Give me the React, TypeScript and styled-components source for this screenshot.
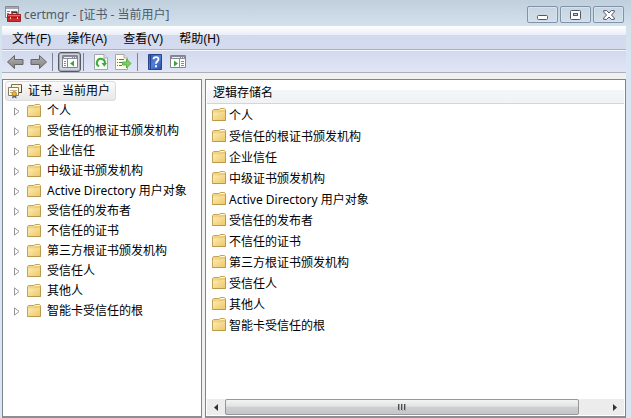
import React from "react";
import styled, { createGlobalStyle, css } from "styled-components";

const GlobalStyle = createGlobalStyle`
  * { box-sizing: border-box; }
  body { margin: 0; }
  body, button {
    font-family: "Noto Sans", "Noto Sans CJK SC", sans-serif;
    font-size: 12px;
    line-height: 20px;
    color: #000;
  }
  button { margin: 0; padding: 0; border: 0; background: none; }
  ul { list-style: none; margin: 0; padding: 0; }
  svg { display: block; flex: none; }
`;

const Window = styled.div`
  display: flex;
  flex-direction: column;
  height: 100vh;
  padding: 0 5px 0 2px;
  background: linear-gradient(#c0cfdc 0, #d3e1ed 26px, #d8e5f2 60px);
`;

const TitleBar = styled.header`
  display: flex;
  align-items: center;
  flex: none;
  height: 26px;
  padding: 2px 2px 0 3px;
`;

const Title = styled.h1`
  flex: 1;
  margin: 2px 0 0 3px;
  font-size: 12px;
  font-weight: 400;
  line-height: 20px;
  color: #4c5b6b;
  white-space: nowrap;
`;

const WindowButtons = styled.div`
  display: flex;
  gap: 2px;
  padding-top: 1px;
`;

const WindowButton = styled.button`
  display: flex;
  align-items: center;
  justify-content: center;
  width: 31px;
  height: 17px;
  border: 1px solid #8193a7;
  border-radius: 2px;
  background: linear-gradient(#c7d5e2, #d2dfeb);
  box-shadow: inset 0 0 0 1px #d6e2ec;
`;

const MenuBar = styled.nav`
  display: flex;
  flex: none;
  gap: 16px;
  height: 24px;
  padding: 2px 10px 0;
  border-bottom: 1px solid #adb1bf;
  background: linear-gradient(#fff 0, #e9edf7 9px, #d4daed 9px, #d5dbee 100%);
`;

const MenuItem = styled.button`
  font-family: "Liberation Sans", "Noto Sans CJK SC", sans-serif;
  white-space: nowrap;
`;

const ToolBar = styled.div`
  display: flex;
  align-items: center;
  flex: none;
  height: 23px;
  padding-left: 2px;
  border-top: 1px solid #f4f6fb;
  border-bottom: 1px solid #adb0b8;
  background: linear-gradient(#d3d9ee, #e1e6f6);
`;

const ToolButton = styled.button<{ $active?: boolean }>`
  display: flex;
  align-items: center;
  justify-content: center;
  width: 23px;
  height: 20px;
  border-radius: 3px;
  ${(p) =>
    p.$active &&
    css`
      border: 1px solid #555a66;
      background: #cfd3df;
      box-shadow: inset 0 0 0 1px #a5aab8;
    `}
`;

const Separator = styled.span`
  width: 1px;
  height: 18px;
  margin: 0 5px 0 2px;
  background: #7d8494;
`;

const Panes = styled.main`
  display: grid;
  grid-template-columns: 200px minmax(0, 1fr);
  gap: 3px;
  flex: 1;
  min-height: 0;
  padding-top: 6px;
  background: #f0f0f0;
`;

const Pane = styled.section`
  display: flex;
  flex-direction: column;
  min-width: 0;
  border: 1px solid #7f858c;
  border-bottom: 2px solid #8c8e94;
  background: #fff;
`;

const TreePane = styled(Pane)`
  padding: 1px 2px;
`;

const TreeRoot = styled.button`
  display: flex;
  align-items: center;
  align-self: flex-start;
  gap: 5px;
  height: 20px;
  padding: 0 5px 0 1px;
  border: 1px solid #dcdcdc;
  border-radius: 3px;
  background: linear-gradient(#fafafa, #e8e8e8);
  white-space: nowrap;
`;

const TreeRow = styled.li`
  display: flex;
  align-items: center;
  height: 20px;
  padding-left: 9px;
  white-space: nowrap;
`;

const Expander = styled.button`
  width: 13px;
`;

const TreeLabel = styled.span`
  margin-left: 5px;
`;

const ListPane = styled(Pane)`
  padding: 2px 1px 1px;
`;

const ColumnHeader = styled.div`
  flex: none;
  height: 22px;
  padding-left: 6px;
  line-height: 22px;
  border-bottom: 1px solid #d5d5d5;
  background: linear-gradient(#fff 0, #fff 8px, #f5f6f8 8px, #f1f2f4 100%);
`;

const StoreList = styled.ul`
  flex: 1;
  min-height: 0;
  padding-top: 1px;
`;

const StoreRow = styled.li`
  display: flex;
  align-items: center;
  gap: 2px;
  height: 21px;
  padding-left: 5px;
  white-space: nowrap;
`;

const ScrollBar = styled.div`
  display: flex;
  flex: none;
  height: 16px;
  background: #ececec;
`;

const ScrollButton = styled.button`
  display: flex;
  align-items: center;
  justify-content: center;
  width: 18px;
`;

const Track = styled.div`
  display: flex;
  flex: 1;
`;

const Thumb = styled.div`
  display: flex;
  align-items: center;
  justify-content: center;
  width: 93%;
  border: 1px solid #979797;
  border-radius: 2px;
  background: linear-gradient(#f3f3f3 0, #e3e3e3 45%, #cdcfd1 50%, #c4c6c9 100%);
`;

const Folder = () => (
  <svg width="15" height="15" viewBox="0 1 15 15" aria-hidden="true">
    <defs>
      <linearGradient id="folder" x2="1" y2="1">
        <stop offset="0" stopColor="#fdeeb5" />
        <stop offset="1" stopColor="#edc869" />
      </linearGradient>
    </defs>
    <path d="M.5 3.5 1.5 2.5H7L8 1.5H12.5L13.5 2.5V13.5H.5Z" fill="#f0d584" stroke="#c6a55b" />
    <path d="M8.5 2.5H12.5" stroke="#fffbe5" />
    <path d="M1 5.5H7.5L9 4H13V13H1Z" fill="url(#folder)" />
    <path d="M7.5 5.5 9 4H13" fill="none" stroke="#d5b162" strokeWidth=".7" />
    <path d="M.5 13.5H13.5V4" fill="none" stroke="#bd984f" />
  </svg>
);

const Arrow = ({ flip }: { flip?: boolean }) => (
  <svg width="17" height="14" viewBox="0 0 17 14" aria-hidden="true">
    <defs>
      <linearGradient id="arrow" x2="0" y2="1">
        <stop offset="0" stopColor="#b4b4b4" />
        <stop offset="1" stopColor="#808080" />
      </linearGradient>
    </defs>
    <path
      d={flip ? "M16.5 7 9.5.5V4.5H1V9.5H9.5V13.5Z" : "M.5 7 7.5.5V4.5H16V9.5H7.5V13.5Z"}
      fill="url(#arrow)"
      stroke="#656565"
      strokeLinejoin="round"
    />
  </svg>
);

const PanelIcon = ({ right }: { right?: boolean }) => (
  <svg width="16" height="13" viewBox="0 0 16 13" aria-hidden="true">
    <path d="M.5.5H15.5V12.5H.5Z" fill="#fff" stroke="#80848d" />
    <path d="M1 1H15V4H1Z" fill="#858a94" />
    <path d="M2 2.5H10M11 2.5H12M13 2.5H14" stroke="#eceef3" />
    {right ? (
      <>
        <path d="M9.5 4V12" stroke="#858a94" />
        <path d="M11 6.5H14M11 8.5H14M11 10.5H14" stroke="#858a94" />
        <path d="M4 5.5V11.5L8 8.5Z" fill="#35a936" />
      </>
    ) : (
      <>
        <path d="M5.5 4V12" stroke="#858a94" />
        <path d="M2 6.5H4M2 8.5H4M2 10.5H4" stroke="#858a94" />
        <path d="M12 5.5V11.5L8 8.5Z" fill="#35a936" />
      </>
    )}
  </svg>
);

const RefreshIcon = () => (
  <svg width="14" height="16" viewBox="0 0 14 16" aria-hidden="true">
    <path d="M.5.5H10L13.5 4V15.5H.5Z" fill="#fdfdf8" stroke="#a4a6ac" />
    <path d="M10 .5V4H13.5" fill="#e8e8e8" stroke="#a4a6ac" />
    <path d="M5 12.3A4 4 0 1 1 10.8 9.5" fill="none" stroke="#38ac38" strokeWidth="2" />
    <path d="M7.5 9H13L10.3 12.8Z" fill="#38ac38" />
  </svg>
);

const ExportIcon = () => (
  <svg width="17" height="16" viewBox="0 0 17 16" aria-hidden="true">
    <path d="M.5.5H9L12.5 4V15.5H.5Z" fill="#fffdec" stroke="#a9a9a2" />
    <path d="M9 .5V4H12.5" fill="#e8e8e0" stroke="#a9a9a2" />
    <path d="M2 5.5H3M4 5.5H9M2 8.5H3M4 8.5H7M2 11.5H3M4 11.5H7" stroke="#6c6c78" />
    <path d="M7.5 8H11.5V5L16 9.5 11.5 14V11H7.5Z" fill="#7bd25b" stroke="#43a43a" strokeWidth=".8" />
  </svg>
);

const HelpIcon = () => (
  <svg width="14" height="16" viewBox="0 0 14 16" aria-hidden="true">
    <defs>
      <linearGradient id="help" x2="1" y2="1">
        <stop offset="0" stopColor="#3159b0" />
        <stop offset=".5" stopColor="#5380d6" />
        <stop offset="1" stopColor="#294ba5" />
      </linearGradient>
    </defs>
    <path d="M.5.5H13.5V15.5H.5Z" fill="url(#help)" stroke="#27458f" />
    <path d="M2.5 1V15" stroke="#233f91" />
    <path d="M5.5 5.2C5.5 2.3 10.5 2.3 10.5 5.2 10.5 7.2 8 7.3 8 9.7" fill="none" stroke="#fff" strokeWidth="1.8" />
    <path d="M7 11.2H9V13.2H7Z" fill="#fff" />
  </svg>
);

const AppIcon = () => (
  <svg width="16" height="16" viewBox="0 0 16 16" aria-hidden="true">
    <path d="M.5.5H13.5V11.5H.5Z" fill="#f5f6f8" stroke="#858a93" />
    <path d="M1 1H13V3H1Z" fill="#a1a6b0" />
    <path d="M2 5.5H5M6 5.5H12M2 7.5H4" stroke="#7e838e" />
    <path d="M7 8V6.5H12V8" fill="none" stroke="#4b3033" strokeWidth="1.3" />
    <path d="M2.5 8.5H15.5V15.5H2.5Z" fill="#cb2c2c" stroke="#982225" />
    <path d="M3 9.5H15" stroke="#e86a61" />
    <path d="M3 11.5H15" stroke="#8b2022" />
    <path d="M5 11H6V13H5ZM12 11H13V13H12Z" fill="#f4d5ce" />
  </svg>
);

const CertificateIcon = () => (
  <svg width="16" height="16" viewBox="0 0 16 16" aria-hidden="true">
    <path d="M4.5 1.5H14.5V9.5H4.5Z" fill="#faf3dd" stroke="#807153" />
    <path d="M14.5 2V9.5H5" fill="none" stroke="#51483b" />
    <path d="M1.5 4.5H11.5V12.5H1.5Z" fill="#fffdf1" stroke="#8c7d61" />
    <path d="M3 7.5H10M3 9.5H6" stroke="#bcb39d" />
    <path d="M6 11 5 15.5 7.3 14.3 9.5 15.5 9 11Z" fill="#3d5e91" />
    <circle cx="7.3" cy="10.8" r="2.2" fill="#f0b62b" stroke="#a97513" strokeWidth=".8" />
  </svg>
);

const MinimizeIcon = () => (
  <svg width="12" height="12" viewBox="0 0 12 12" aria-hidden="true">
    <rect x=".5" y="6.5" width="10" height="4" rx="1" fill="#fff" stroke="#535666" />
  </svg>
);

const MaximizeIcon = () => (
  <svg width="12" height="10" viewBox="0 0 12 10" aria-hidden="true">
    <rect x=".5" y=".5" width="10" height="9" rx="1" fill="#fff" stroke="#535666" />
    <rect x="3.5" y="3.5" width="4" height="2" fill="#c9d5e2" stroke="#535666" />
  </svg>
);

const CloseIcon = () => (
  <svg width="12" height="10" viewBox="0 0 12 10" aria-hidden="true">
    <path
      d="M.7.6H3.7L6 3 8.3.6H11.3V2L8.5 5 11.3 8V9.4H8.3L6 7 3.7 9.4H.7V8L3.5 5 .7 2Z"
      fill="#fff"
      stroke="#535666"
      strokeLinejoin="round"
    />
  </svg>
);

const ExpandIcon = () => (
  <svg width="6" height="9" viewBox="0 0 6 9" aria-hidden="true">
    <path d="M.5.8V8.2L5 4.5Z" fill="#fff" stroke="#989898" />
  </svg>
);

const ScrollArrow = ({ right }: { right?: boolean }) => (
  <svg width="4" height="7" viewBox="0 0 4 7" aria-hidden="true">
    <path d={right ? "M0 0V7L4 3.5Z" : "M4 0V7L0 3.5Z"} fill="#333" />
  </svg>
);

const Grip = () => (
  <svg width="9" height="7" viewBox="0 0 9 7" aria-hidden="true">
    <path d="M.5 0V6M3.5 0V6M6.5 0V6" stroke="#4b4d52" />
    <path d="M1.5 0V7M4.5 0V7M7.5 0V7" stroke="#a5a7aa" />
  </svg>
);

const menus = ["文件(F)", "操作(A)", "查看(V)", "帮助(H)"];

const stores = [
  "个人",
  "受信任的根证书颁发机构",
  "企业信任",
  "中级证书颁发机构",
  "Active Directory 用户对象",
  "受信任的发布者",
  "不信任的证书",
  "第三方根证书颁发机构",
  "受信任人",
  "其他人",
  "智能卡受信任的根",
];

export default function App() {
  return (
    <>
      <GlobalStyle />
      <Window>
        <TitleBar>
          <AppIcon />
          <Title>certmgr - [证书 - 当前用户]</Title>
          <WindowButtons>
            <WindowButton aria-label="最小化"><MinimizeIcon /></WindowButton>
            <WindowButton aria-label="最大化"><MaximizeIcon /></WindowButton>
            <WindowButton aria-label="关闭"><CloseIcon /></WindowButton>
          </WindowButtons>
        </TitleBar>
        <MenuBar>
          {menus.map((name) => <MenuItem key={name}>{name}</MenuItem>)}
        </MenuBar>
        <ToolBar>
          <ToolButton aria-label="后退"><Arrow /></ToolButton>
          <ToolButton aria-label="前进"><Arrow flip /></ToolButton>
          <Separator />
          <ToolButton $active aria-label="显示/隐藏控制台树"><PanelIcon /></ToolButton>
          <Separator />
          <ToolButton aria-label="刷新"><RefreshIcon /></ToolButton>
          <ToolButton aria-label="导出列表"><ExportIcon /></ToolButton>
          <Separator />
          <ToolButton aria-label="帮助"><HelpIcon /></ToolButton>
          <ToolButton aria-label="显示/隐藏操作窗格"><PanelIcon right /></ToolButton>
        </ToolBar>
        <Panes>
          <TreePane>
            <TreeRoot><CertificateIcon />证书 - 当前用户</TreeRoot>
            <ul>
              {stores.map((name) => (
                <TreeRow key={name}>
                  <Expander aria-label={`展开 ${name}`}><ExpandIcon /></Expander>
                  <Folder />
                  <TreeLabel>{name}</TreeLabel>
                </TreeRow>
              ))}
            </ul>
          </TreePane>
          <ListPane>
            <ColumnHeader>逻辑存储名</ColumnHeader>
            <StoreList>
              {stores.map((name) => (
                <StoreRow key={name}><Folder />{name}</StoreRow>
              ))}
            </StoreList>
            <ScrollBar>
              <ScrollButton aria-label="向左滚动"><ScrollArrow /></ScrollButton>
              <Track><Thumb><Grip /></Thumb></Track>
              <ScrollButton aria-label="向右滚动"><ScrollArrow right /></ScrollButton>
            </ScrollBar>
          </ListPane>
        </Panes>
      </Window>
    </>
  );
}
